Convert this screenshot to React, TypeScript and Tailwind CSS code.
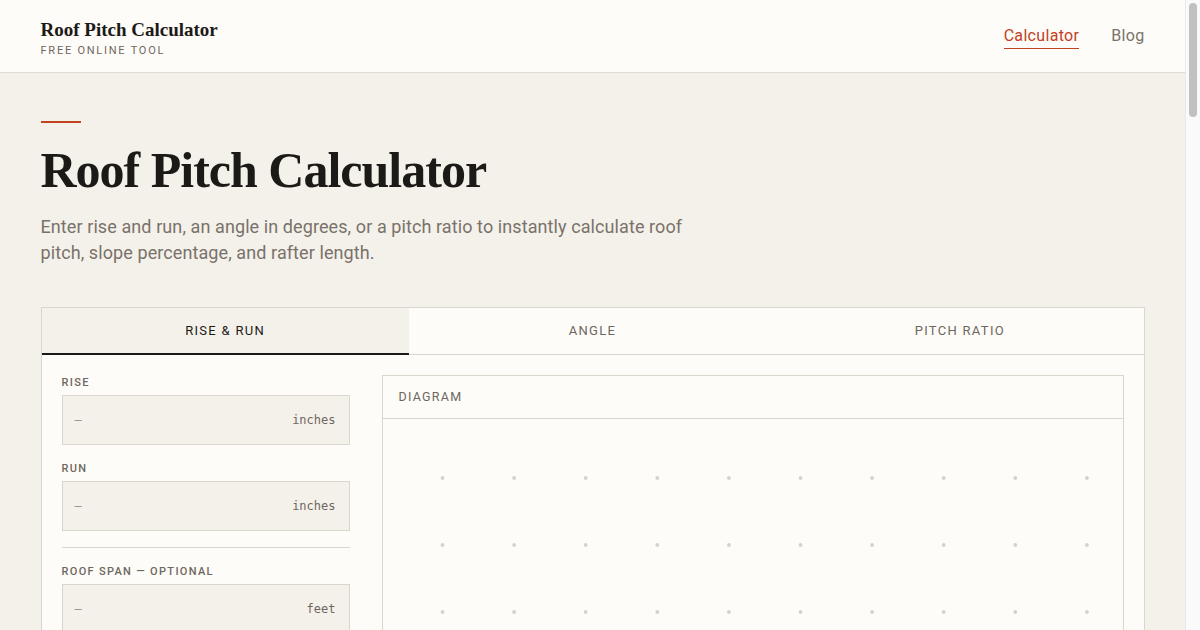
import React from "react";

const serif = { fontFamily: '"Liberation Serif", "Times New Roman", serif' };
const mono = { fontFamily: '"DejaVu Sans Mono", monospace' };

function Field({ label, unit }: { label: string; unit: string }) {
  return (
    <div className="flex flex-col">
      <div className="text-[11px] font-medium tracking-[0.12em] text-[#6f675f] leading-[14px] mb-[5px]">{label}</div>
      <div className="h-[50px] bg-[#f4f1ea] border border-[#dbd6cb] flex items-center justify-between pl-[12px] pr-[13px]">
        <span className="text-[#9a938b] text-[12px]" style={mono}>—</span>
        <span className="text-[#6f675f] text-[12px]" style={mono}>{unit}</span>
      </div>
    </div>
  );
}

function DotGrid() {
  const xs = Array.from({ length: 10 }, (_, i) => 59.5 + i * 71.6);
  const ys = [59, 126, 193, 260, 327];
  return (
    <svg width="740" height="360" className="block">
      {ys.map((y) =>
        xs.map((x) => <circle key={`${x}-${y}`} cx={x} cy={y} r={1.9} fill="#d6d2c7" />)
      )}
    </svg>
  );
}

export default function App() {
  return (
    <div className="flex items-start bg-[#f4f1ea]">
      <div className="flex-1 min-w-0 min-h-screen bg-[#f4f1ea] text-[#1c1a17]" style={{ fontFamily: 'Roboto, "Noto Sans", sans-serif' }}>
        <header className="h-[73px] bg-[#fdfcf8] border-b border-[#e0dbd1]">
          <div className="max-w-[1104px] mx-auto h-full flex items-center justify-between">
            <div className="flex flex-col pt-[5px]">
              <div className="text-[19px] font-bold leading-[22px] text-[#1c1a17]" style={serif}>Roof Pitch Calculator</div>
              <div className="text-[11px] tracking-[0.16em] text-[#6f675f] leading-[14px] mt-[3px]">FREE ONLINE TOOL</div>
            </div>
            <nav className="flex items-center gap-[32px] text-[16px] tracking-[0.02em] pt-[2px]">
              <a className="text-[#c2411f] border-b border-[#c2411f] pb-[2px] leading-[20px]">Calculator</a>
              <a className="text-[#7a726a] pb-[3px] leading-[20px]">Blog</a>
            </nav>
          </div>
        </header>

        <main className="max-w-[1104px] mx-auto pt-[48px] pb-[80px]">
          <div className="w-[40px] h-[2px] bg-[#c2411f]" />
          <h1 className="mt-[19px] text-[50px] leading-[56px] font-bold tracking-[-0.02em] text-[#1c1a17]" style={serif}>
            Roof Pitch Calculator
          </h1>
          <p className="mt-[16px] w-[660px] text-[18px] leading-[26px] tracking-[0.005em] text-[#7a726a]">
            Enter rise and run, an angle in degrees, or a pitch ratio to instantly calculate roof pitch, slope percentage, and rafter length.
          </p>

          <section className="mt-[41px] border border-[#dbd6cb] bg-[#fdfcf8]">
            <div className="grid grid-cols-3 h-[47px] border-b border-[#dbd6cb]">
              <button className="bg-[#f4f1ea] border-b-2 border-[#1c1a17] -mb-px text-[13px] tracking-[0.1em] text-[#1c1a17]">RISE &amp; RUN</button>
              <button className="text-[13px] tracking-[0.1em] text-[#6f675f]">ANGLE</button>
              <button className="text-[13px] tracking-[0.1em] text-[#6f675f]">PITCH RATIO</button>
            </div>
            <div className="flex gap-[32px] p-[20px]">
              <div className="w-[288px] flex flex-col">
                <div className="pt-[1px]"><Field label="RISE" unit="inches" /></div>
                <div className="mt-[17px]"><Field label="RUN" unit="inches" /></div>
                <div className="h-px bg-[#dbd6cb] mt-[16px] mb-[17px]" />
                <Field label="ROOF SPAN — OPTIONAL" unit="feet" />
                <div className="mt-[17px]"><Field label="OVERHANG — OPTIONAL" unit="inches" /></div>
              </div>
              <div className="flex-1 border border-[#dbd6cb] self-start">
                <div className="h-[43px] border-b border-[#dbd6cb] flex items-center px-[16px] text-[12.5px] tracking-[0.1em] text-[#6f675f]">DIAGRAM</div>
                <DotGrid />
              </div>
            </div>
          </section>

          <section className="mt-[48px] border border-[#dbd6cb] bg-[#fdfcf8] p-[24px] h-[420px]">
            <div className="text-[12px] tracking-[0.1em] text-[#6f675f]">RESULTS</div>
          </section>

          <section className="mt-[64px] w-[700px]">
            <h2 className="text-[32px] font-bold" style={serif}>How to calculate roof pitch</h2>
            <p className="mt-[16px] text-[17px] leading-[28px] text-[#7a726a]">
              Roof pitch is the ratio of vertical rise to horizontal run, usually expressed as inches of rise per 12 inches of run.
            </p>
            <div className="h-[1500px]" />
          </section>
        </main>
      </div>
      <div className="sticky top-0 w-[15px] h-[630px] shrink-0 bg-[#fafafa] border-l border-[#e8e8e8] pt-[3px] pl-[3px] pr-[3px]">
        <div className="h-[114px] w-full rounded-full bg-[#c1c1c1]" />
      </div>
    </div>
  );
}
